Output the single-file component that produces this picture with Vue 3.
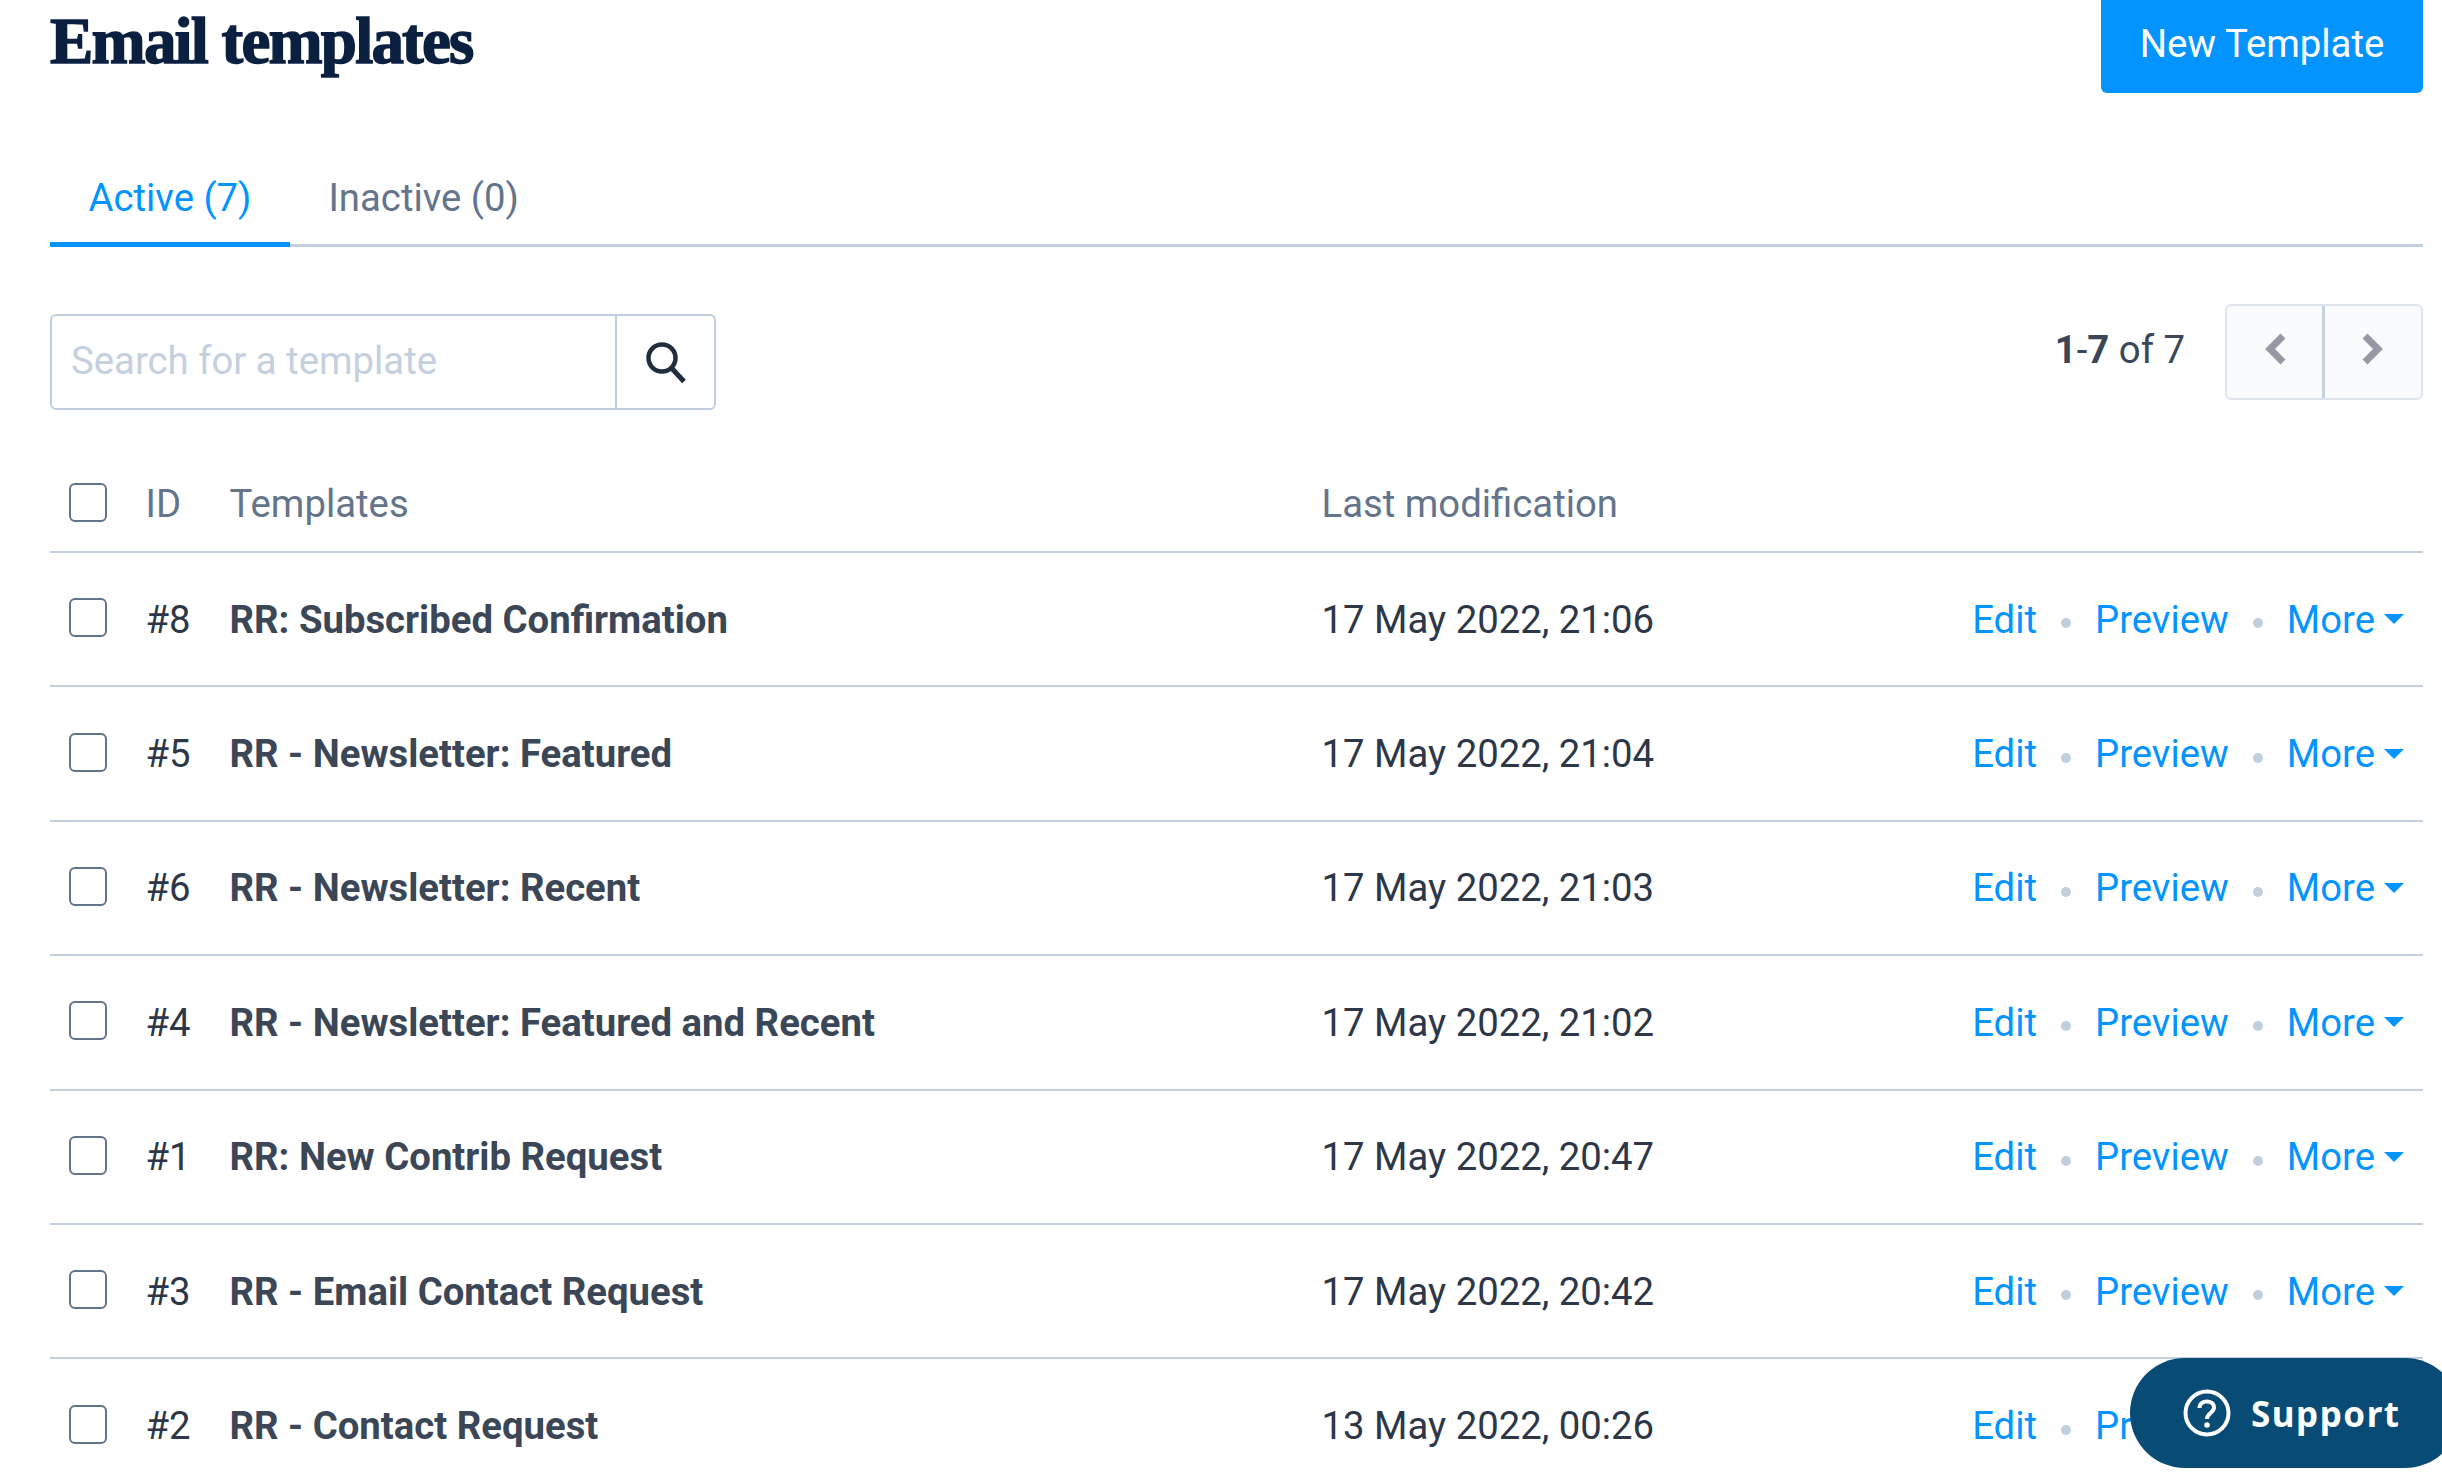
<template>
  <div class="page">
    <header class="top">
      <h1>Email templates</h1>
      <button class="btn-new">New Template</button>
    </header>

    <nav class="tabs">
      <a class="tab active">Active (7)</a>
      <a class="tab">Inactive (0)</a>
    </nav>

    <div class="tools">
      <div class="search">
        <span class="placeholder">Search for a template</span>
        <span class="search-btn">
          <svg width="46" height="46" viewBox="0 0 46 46" fill="none" stroke="#1f2d3d">
            <circle cx="19" cy="19" r="13.5" stroke-width="4.5" />
            <path d="M28.5 29 L41 42.5" stroke-width="5" />
          </svg>
        </span>
      </div>
      <div class="pager">
        <span class="count"><b>1</b>-<b>7</b> of 7</span>
        <div class="arrows">
          <span class="arrow">
            <svg width="22" height="32" viewBox="0 0 22 32" fill="none" stroke="#9499a3" stroke-width="7">
              <path d="M19 3 L6 16 L19 29" />
            </svg>
          </span>
          <span class="arrow">
            <svg width="22" height="32" viewBox="0 0 22 32" fill="none" stroke="#9499a3" stroke-width="7">
              <path d="M3 3 L16 16 L3 29" />
            </svg>
          </span>
        </div>
      </div>
    </div>

    <div class="row head">
      <span class="check"></span>
      <span>ID</span>
      <span>Templates</span>
      <span>Last modification</span>
    </div>
    <div v-for="t in templates" :key="t.id" class="row">
      <span class="check"></span>
      <span class="id">#{{ t.id }}</span>
      <strong class="name">{{ t.name }}</strong>
      <span class="date">{{ t.date }}</span>
      <div class="actions">
        <a>Edit</a>
        <i class="dot"></i>
        <a>Preview</a>
        <i class="dot"></i>
        <a>More</a>
        <i class="caret"></i>
      </div>
    </div>

    <div class="support">
      <svg width="48" height="48" viewBox="0 0 48 48" fill="none">
        <circle cx="24" cy="24" r="21.5" stroke="#fff" stroke-width="4" />
        <path d="M16.5 19 C16.5 10 31 10.5 31 18.5 C31 24 24 24 24 30" stroke="#fff" stroke-width="4" />
        <circle cx="24" cy="36" r="2.8" fill="#fff" />
      </svg>
      <span>Support</span>
    </div>
  </div>
</template>

<script setup>
const templates = [
  { id: 8, name: "RR: Subscribed Confirmation", date: "17 May 2022, 21:06" },
  { id: 5, name: "RR - Newsletter: Featured", date: "17 May 2022, 21:04" },
  { id: 6, name: "RR - Newsletter: Recent", date: "17 May 2022, 21:03" },
  { id: 4, name: "RR - Newsletter: Featured and Recent", date: "17 May 2022, 21:02" },
  { id: 1, name: "RR: New Contrib Request", date: "17 May 2022, 20:47" },
  { id: 3, name: "RR - Email Contact Request", date: "17 May 2022, 20:42" },
  { id: 2, name: "RR - Contact Request", date: "13 May 2022, 00:26" },
];
</script>

<style>
html,
body {
  margin: 0;
  background: #fff;
  overflow: hidden;
}
</style>

<style scoped>
.page {
  height: 1474px;
  overflow: hidden;
  padding: 0 19px 0 50px;
  font-family: Roboto, "Liberation Sans", sans-serif;
  font-size: 38.3px;
  color: #3b4656;
  box-sizing: border-box;
}
.top {
  display: flex;
  justify-content: space-between;
  align-items: flex-start;
  height: 93px;
}
h1 {
  margin: 0;
  font-family: "Liberation Serif", serif;
  font-size: 65px;
  line-height: 82px;
  font-weight: 700;
  letter-spacing: -1.8px;
  color: #0b2040;
  -webkit-text-stroke: 1.5px #0b2040;
}
.btn-new {
  width: 322px;
  height: 93px;
  border: none;
  border-radius: 0 0 6px 6px;
  background: #0394ff;
  color: #fff;
  font: inherit;
  padding: 0 0 6px;
}
.tabs {
  display: flex;
  height: 154px;
  border-bottom: 3px solid #c5d0de;
  box-sizing: border-box;
}
.tab {
  display: flex;
  align-items: flex-end;
  padding: 0 38.5px 22px;
  margin-bottom: -3px;
  border-bottom: 5px solid transparent;
  color: #64748b;
}
.tab.active {
  color: #0394ff;
  border-bottom-color: #0394ff;
}
.tools {
  display: flex;
  justify-content: space-between;
  align-items: flex-start;
  height: 206px;
  padding-top: 57px;
  box-sizing: border-box;
}
.search {
  display: flex;
  width: 666px;
  height: 96px;
  margin-top: 10px;
  border: 2px solid #c1cedd;
  border-radius: 6px;
  box-sizing: border-box;
}
.placeholder {
  flex: 1;
  padding-left: 19px;
  line-height: 90px;
  color: #c5d0de;
}
.search-btn {
  width: 97px;
  display: flex;
  align-items: center;
  justify-content: center;
  border-left: 2px solid #c1cedd;
}
.pager {
  display: flex;
  align-items: center;
  gap: 40px;
}
.count {
  margin-bottom: 5px;
}
.count b {
  font-weight: 700;
}
.arrows {
  display: flex;
  width: 198px;
  height: 96px;
  border: 2px solid #dfe5ee;
  border-radius: 6px;
  background: #fafbfd;
  box-sizing: border-box;
}
.arrow {
  flex: 1;
  display: flex;
  align-items: center;
  justify-content: center;
  padding-bottom: 6px;
}
.arrow:first-child {
  flex: none;
  width: 95px;
}
.arrow + .arrow {
  border-left: 3px solid #c9d3e0;
}
.row {
  display: grid;
  grid-template-columns: 76.5px 84px 1092px 1fr auto;
  align-items: center;
  height: 134.4px;
  padding-left: 19px;
  border-bottom: 2px solid #c5d0de;
  box-sizing: border-box;
}
.row .check {
  margin-bottom: 3px;
}
.head {
  height: 100px;
  padding-top: 2px;
  color: #64748b;
}
.row.head .check {
  margin-bottom: 2px;
}
.check {
  width: 38px;
  height: 39px;
  border: 2.5px solid #64748b;
  border-radius: 6px;
  box-sizing: border-box;
}
.id,
.date {
  color: #2d3748;
}
.name {
  font-weight: 700;
  color: #3b4656;
}
.actions {
  grid-column: 5;
  display: flex;
  align-items: center;
  padding-right: 19px;
  color: #0394ff;
}
.dot {
  width: 10px;
  height: 10px;
  margin: 8px 24px 0;
  border-radius: 50%;
  background: #c1cedd;
}
.caret {
  width: 0;
  height: 0;
  margin-left: 9px;
  border: 10px solid transparent;
  border-top-color: #0394ff;
  border-bottom: none;
}
.support {
  position: fixed;
  left: 2130px;
  top: 1358px;
  width: 330px;
  height: 110px;
  display: flex;
  align-items: center;
  gap: 20px;
  padding-left: 53px;
  box-sizing: border-box;
  border-radius: 55px;
  background: #084c75;
  color: #fff;
  font-family: "Noto Sans", sans-serif;
  font-weight: 700;
  font-size: 35px;
  letter-spacing: 1.5px;
}
</style>
